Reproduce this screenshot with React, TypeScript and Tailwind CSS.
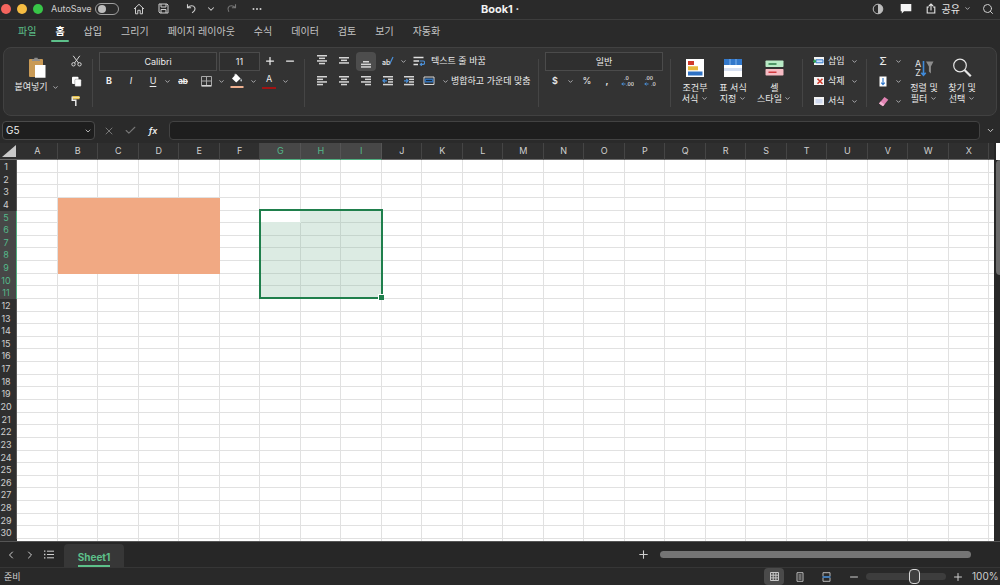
import type { ReactNode } from "react";
import { clsx } from "clsx";
import { Check, ChevronDown, ChevronLeft, ChevronRight, Minus, Plus, Search, X } from "lucide-react";

const TABS = ["파일", "홈", "삽입", "그리기", "페이지 레이아웃", "수식", "데이터", "검토", "보기", "자동화"];
const COLUMNS = "ABCDEFGHIJKLMNOPQRSTUVWX".split("");
const ROWS = Array.from({ length: 30 }, (_, i) => i + 1);

const inSelection = (col: number, row: number) => col >= 6 && col <= 8 && row >= 5 && row <= 11;
const isFilled = (col: number, row: number) => col >= 1 && col <= 4 && row >= 4 && row <= 9;

function Caret({ className }: { className?: string }) {
  return (
    <span className={clsx("flex shrink-0 justify-center text-zinc-300", className ?? "w-2")}>
      <ChevronDown size={7} strokeWidth={2.5} />
    </span>
  );
}

interface ToolProps {
  label: string;
  className?: string;
  children: ReactNode;
}

function Tool({ label, className, children }: ToolProps) {
  return (
    <button type="button" aria-label={label} className={clsx("flex h-5 shrink-0 items-center justify-center", className ?? "w-[22px]")}>
      {children}
    </button>
  );
}

function Divider() {
  return <div className="h-12 w-px shrink-0 self-center bg-[#454545]" />;
}

/* Stacked text lines, each entry is [x, width] */
function Lines({ rows, top = 1, children }: { rows: [number, number][]; top?: number; children?: ReactNode }) {
  return (
    <svg width="12" height="12" viewBox="0 0 12 12" fill="#d6d6d6">
      {rows.map(([x, w], i) => (
        <rect key={i} x={x} y={top + i * 2.6} width={w} height="1.5" />
      ))}
      {children}
    </svg>
  );
}

function TitleBar() {
  return (
    <header className="relative flex h-5 shrink-0 items-center justify-between border-b border-[#3d3d3d] pb-0.5 text-[#cfcfcf]">
      <div className="flex items-center">
        <div className="flex gap-1.5 pl-px">
          <span className="size-2.5 rounded-full bg-[#f5655e]" />
          <span className="size-2.5 rounded-full bg-[#f6bd42]" />
          <span className="size-2.5 rounded-full bg-[#38c648]" />
        </div>
        <label htmlFor="autosave" className="ml-2 w-[42px] text-[9px]">AutoSave</label>
        <input
          id="autosave"
          type="checkbox"
          className="ml-0.5 h-3 w-6 appearance-none rounded-full border border-[#a0a0a0] bg-[#2a2a2a] before:ml-0.5 before:mt-px before:block before:size-2 before:rounded-full before:bg-[#bdbdbd]"
        />
        <button type="button" aria-label="Home" className="ml-2 flex w-6 justify-center">
          <svg width="12" height="12" viewBox="0 0 12 12" fill="none" stroke="currentColor" strokeWidth="1">
            <path d="M1 6 6 1.3 11 6M2.5 5v5.8h2.3V7.3h2.4v3.5h2.3V5" />
          </svg>
        </button>
        <button type="button" aria-label="Save" className="flex w-6 justify-center">
          <svg width="11" height="11" viewBox="0 0 11 11" fill="none" stroke="currentColor" strokeWidth="1">
            <path d="M1 1h8l1 1v8H2L1 9zM3 1v3h5V1M3 10V6.5h5V10" />
          </svg>
        </button>
        <button type="button" aria-label="Undo" className="ml-1 flex w-6 justify-center">
          <svg width="11" height="11" viewBox="0 0 11 11" fill="none" stroke="currentColor" strokeWidth="1.1">
            <path d="M1.5 1.2v3.6h3.6M1.7 4.6C4 2.2 7.6 2.3 8.7 4.4c1 2-.2 3.6-2.6 5.3" />
          </svg>
        </button>
        <button type="button" aria-label="Undo history" className="flex w-4 justify-center">
          <ChevronDown size={10} strokeWidth={2.5} />
        </button>
        <button type="button" aria-label="Redo" className="flex w-6 justify-center text-[#777]">
          <svg width="11" height="11" viewBox="0 0 11 11" fill="none" stroke="currentColor" strokeWidth="1.1">
            <path d="M9.5 1.2v3.6H5.9M9.3 4.6C7 2.2 3.4 2.3 2.3 4.4c-1 2 .2 3.6 .6 4.3" />
          </svg>
        </button>
        <button type="button" aria-label="More" className="ml-0.5 flex w-6 justify-center">
          <svg width="10" height="4" viewBox="0 0 10 4" fill="currentColor">
            <circle cx="1.5" cy="2" r="1" />
            <circle cx="5" cy="2" r="1" />
            <circle cx="8.5" cy="2" r="1" />
          </svg>
        </button>
      </div>
      <h1 className="absolute inset-x-0 top-px mx-auto w-fit text-[11px] leading-4 font-bold text-[#f2f2f2]">Book1 ·</h1>
      <div className="flex items-center">
        <button type="button" aria-label="Contrast" className="flex w-7 justify-center">
          <svg width="12" height="12" viewBox="0 0 12 12">
            <circle cx="6" cy="6" r="4.8" fill="none" stroke="#bdbdbd" />
            <path d="M6 1.2a4.8 4.8 0 0 1 0 9.6z" fill="#bdbdbd" />
          </svg>
        </button>
        <button type="button" aria-label="Comments" className="flex w-7 justify-center">
          <svg width="12" height="11" viewBox="0 0 12 11" fill="#f5f5f5">
            <path d="M.7 1h10.6v7.3H4L1.8 10.4V8.3H.7z" />
          </svg>
        </button>
        <button type="button" className="ml-1 flex items-center text-[10px] leading-4 text-[#e6e6e6]">
          <svg className="mr-1.5 ml-0.5" width="10" height="11" viewBox="0 0 10 11" fill="none" stroke="currentColor" strokeWidth="1.1">
            <path d="M3 4H1.2v6h7.6V4H7M5 7.4V1M2.9 3 5 1l2.1 2" />
          </svg>
          공유
          <Caret className="ml-0.5 w-2.5" />
        </button>
        <button type="button" aria-label="Search" className="ml-1 flex w-6 justify-center">
          <Search size={12} strokeWidth={2} />
        </button>
      </div>
    </header>
  );
}

function RibbonTabs() {
  return (
    <nav className="flex h-[26px] shrink-0 gap-[19px] pl-[18px] text-[10px] leading-[22px] whitespace-nowrap text-[#c4c4c4]">
      {TABS.map((tab) => (
        <a
          key={tab}
          href="#"
          className={clsx(
            "h-[22px]",
            tab === "파일" && "text-[#5dc08a]",
            tab === "홈" && "relative font-bold text-white after:absolute after:-inset-x-1 after:bottom-0 after:h-0.5 after:rounded-full after:bg-[#5dc08a]",
          )}
        >
          {tab}
        </a>
      ))}
    </nav>
  );
}

function ClipboardGroup() {
  return (
    <div className="flex w-[88px] shrink-0">
      <button type="button" className="flex w-[66px] flex-col items-center pt-1.5">
        <svg width="18" height="22" viewBox="0 0 18 22">
          <rect x="1" y="2" width="14" height="18" rx="1" fill="#c99a55" />
          <path d="M4 2.2h2L6.5.8h3l.5 1.4h2V4H4z" fill="#8d8d8d" />
          <path d="M7 8h10.5v12.8H7z" fill="#fff" />
        </svg>
        <span className="mt-0.5 flex items-center gap-1 leading-3 whitespace-nowrap">
          붙여넣기
          <Caret />
        </span>
      </button>
      <div className="flex w-3 flex-col">
        <Tool label="잘라내기" className="w-3">
          <svg width="11" height="12" viewBox="0 0 11 12" fill="none" stroke="#d6d6d6" strokeWidth="1">
            <path d="M2.2.8 7.5 8M8.8.8 3.5 8" />
            <circle cx="2.5" cy="9.3" r="1.7" />
            <circle cx="8.5" cy="9.3" r="1.7" />
          </svg>
        </Tool>
        <Tool label="복사" className="w-3">
          <svg width="11" height="11" viewBox="0 0 11 11">
            <rect x="1" y=".8" width="6.5" height="7.2" rx="1" fill="#fff" />
            <rect x="3.8" y="3.2" width="6.4" height="7.2" rx="1" fill="#fff" stroke="#333" strokeWidth=".3" />
          </svg>
        </Tool>
        <Tool label="서식 복사" className="w-3">
          <svg width="10" height="12" viewBox="0 0 10 12">
            <path d="M1.5 1h7v3.2h-7z" fill="#e6c04c" />
            <path d="M1.2 1.6v3.6h3.6V11" fill="none" stroke="#f0f0f0" strokeWidth="1.4" />
            <path d="M1.2 2.6h7.6" stroke="#f5e6a8" />
          </svg>
        </Tool>
      </div>
    </div>
  );
}

function FontGroup() {
  return (
    <div>
      <div className="flex items-center gap-0.5">
        <input aria-label="글꼴" defaultValue="Calibri" className="h-[19px] w-[118px] border border-[#4b4b4b] bg-[#2f2f2f] text-center text-[9px]" />
        <input aria-label="글꼴 크기" defaultValue="11" className="h-[19px] w-[41px] border border-[#4b4b4b] bg-[#2f2f2f] text-center text-[9px]" />
        <Tool label="글꼴 크게" className="w-4">
          <Plus size={12} strokeWidth={2.5} />
        </Tool>
        <Tool label="글꼴 작게" className="w-5">
          <Minus size={12} strokeWidth={2.5} />
        </Tool>
      </div>
      <div className="flex items-center">
        <Tool label="굵게" className="w-5">
          <b>B</b>
        </Tool>
        <Tool label="기울임꼴" className="w-6">
          <i>I</i>
        </Tool>
        <Tool label="밑줄" className="w-5">
          <u className="underline-offset-2">U</u>
        </Tool>
        <Caret />
        <Tool label="취소선" className="w-6">
          <s className="text-[8px] font-bold">ab</s>
        </Tool>
        <Tool label="테두리">
          <svg width="11" height="11" viewBox="0 0 11 11" fill="none" stroke="#a8a8a8">
            <path d="M.5.5h10v9H.5zM5.5.5v9M.5 5h10" />
            <path d="M.5 10h10" stroke="#fff" />
          </svg>
        </Tool>
        <Caret />
        <Tool label="채우기 색" className="w-6">
          <svg width="14" height="16" viewBox="0 0 14 16">
            <path d="M6.2 1 10.6 5.4 6.2 9.6 2 5.4z" fill="#fff" />
            <path d="M5.2 3V.8" stroke="#fff" />
            <path d="M11 5.6c1.2 1.6 1.3 3 .2 3s-1-1.4-.2-3z" fill="#cfd8e0" />
            <path d="M.5 13h13v2H.5z" fill="#efb08f" />
          </svg>
        </Tool>
        <Caret />
        <Tool label="글꼴 색" className="w-6">
          <span className="flex h-4 w-3.5 items-start justify-center border-b-2 border-[#a01414] leading-3">A</span>
        </Tool>
        <Caret />
      </div>
    </div>
  );
}

function AlignGroup() {
  return (
    <div>
      <div className="flex items-center">
        <Tool label="위쪽 맞춤">
          <Lines rows={[[1, 10], [3, 6], [1, 10], [3, 6]]} top={0} />
        </Tool>
        <Tool label="가운데 맞춤">
          <Lines rows={[[1, 10], [3, 6], [1, 10]]} top={2} />
        </Tool>
        <Tool label="아래쪽 맞춤">
          <span className="flex h-[19px] w-5 items-end justify-center rounded-sm bg-[#4d4d4d] pb-0.5">
            <Lines rows={[[3, 6], [1, 10], [1, 10]]} top={4} />
          </span>
        </Tool>
        <Tool label="방향">
          <svg width="12" height="12" viewBox="0 0 12 12">
            <text x="0" y="10" fontSize="7" fontWeight="600" fill="#e0e0e0">ab</text>
            <path d="M7.5 9.5 11 2" stroke="#4a90d9" strokeWidth="1.2" />
          </svg>
        </Tool>
        <Caret />
        <button type="button" className="flex h-5 items-center whitespace-nowrap">
          <span className="flex w-6 justify-center">
            <svg width="12" height="10" viewBox="0 0 12 10" fill="none" stroke="#e0e0e0" strokeWidth="1.3">
              <path d="M.5 1.5h10M.5 5H6M.5 8.5H5" />
              <path d="M6.5 5H10a1.6 1.6 0 0 1 0 3.4H7.5M8.8 7 7.3 8.4 8.8 9.8" stroke="#4a90d9" strokeWidth="1.1" />
            </svg>
          </span>
          텍스트 줄 바꿈
        </button>
      </div>
      <div className="flex items-center">
        <Tool label="왼쪽 맞춤">
          <Lines rows={[[1, 10], [1, 6], [1, 10], [1, 6]]} />
        </Tool>
        <Tool label="가로 가운데 맞춤">
          <Lines rows={[[1, 10], [3, 6], [1, 10], [3, 6]]} />
        </Tool>
        <Tool label="오른쪽 맞춤">
          <Lines rows={[[1, 10], [5, 6], [1, 10], [5, 6]]} />
        </Tool>
        <Tool label="내어쓰기">
          <Lines rows={[[1, 10], [6, 5], [6, 5], [1, 10]]}>
            <path d="M5 5.8H1M2.7 4 1 5.8l1.7 1.8" fill="none" stroke="#4a90d9" strokeWidth="1.2" />
          </Lines>
        </Tool>
        <Tool label="들여쓰기" className="w-5">
          <Lines rows={[[1, 10], [6, 5], [6, 5], [1, 10]]}>
            <path d="M1 5.8h4M3.3 4 5 5.8 3.3 7.6" fill="none" stroke="#4a90d9" strokeWidth="1.2" />
          </Lines>
        </Tool>
        <button type="button" className="flex h-5 items-center whitespace-nowrap">
          <span className="flex w-5 justify-center">
            <svg width="12" height="10" viewBox="0 0 12 10" fill="none">
              <path d="M1 1h10v7.5H1z" stroke="#d6d6d6" />
              <path d="M1.5 2.5h9v4h-9z" fill="#2f6fb5" />
              <path d="M3 4.5h6" stroke="#1d2a38" />
            </svg>
          </span>
          <Caret className="w-3" />
          병합하고 가운데 맞춤
        </button>
      </div>
    </div>
  );
}

function DecimalIcon({ top, bottom, topX, bottomX }: { top: string; bottom: string; topX: number; bottomX: number }) {
  return (
    <svg width="13" height="12" viewBox="0 0 13 12" fill="#dcdcdc" fontSize="5" fontWeight="600">
      <text x={topX} y="5">{top}</text>
      <text x={bottomX} y="11">{bottom}</text>
      <path d="M4.5 9H.8M2.3 7.5.8 9l1.5 1.5" fill="none" stroke="#4a90d9" />
    </svg>
  );
}

function NumberGroup() {
  return (
    <div>
      <div className="flex h-5 items-center">
        <input aria-label="표시 형식" defaultValue="일반" className="h-[19px] w-[118px] border border-[#4b4b4b] bg-[#2f2f2f] text-center text-[9px]" />
      </div>
      <div className="flex items-center">
        <Tool label="통화" className="w-5">
          <span className="font-semibold">$</span>
        </Tool>
        <Caret className="w-2.5" />
        <Tool label="백분율" className="w-6">%</Tool>
        <Tool label="쉼표" className="w-4">
          <b>,</b>
        </Tool>
        <Tool label="자릿수 늘림" className="w-6">
          <DecimalIcon top=".0" bottom=".00" topX={3} bottomX={5} />
        </Tool>
        <Tool label="자릿수 줄임">
          <DecimalIcon top=".00" bottom=".0" topX={1} bottomX={7} />
        </Tool>
      </div>
    </div>
  );
}

interface BigToolProps {
  icon: ReactNode;
  lines: [string, string];
  className?: string;
}

function BigTool({ icon, lines, className }: BigToolProps) {
  return (
    <button type="button" className={clsx("flex shrink-0 flex-col items-center pt-[7px] leading-[11px] whitespace-nowrap", className ?? "w-[38px]")}>
      <span className="mb-1 flex h-5 items-center">{icon}</span>
      <span>{lines[0]}</span>
      <span className="flex items-center gap-0.5">
        {lines[1]}
        <Caret />
      </span>
    </button>
  );
}

function StylesGroup() {
  return (
    <div className="flex">
      <BigTool
        lines={["조건부", "서식"]}
        icon={
          <svg width="18" height="18" viewBox="0 0 18 18">
            <path d="M0 0h18v18H0z" fill="#fff" />
            <path d="M2 2h6v4H2z" fill="#d0392b" />
            <path d="M2 7.2h10v4H2z" fill="#e6b93c" />
            <path d="M2 12.4h14.5v4H2z" fill="#2f72c4" />
          </svg>
        }
      />
      <BigTool
        lines={["표 서식", "지정"]}
        icon={
          <svg width="18" height="18" viewBox="0 0 18 18">
            <path d="M0 0h18v18H0z" fill="#fff" />
            <path d="M0 0h18v6H0z" fill="#3278cb" />
            <path d="M6 0v6M12 0v6" stroke="#7fb2ea" />
            <path d="M0 9h18v3H0z" fill="#d7e0f2" />
          </svg>
        }
      />
      <BigTool
        className="w-[45px]"
        lines={["셀", "스타일"]}
        icon={
          <svg width="19" height="18" viewBox="0 0 19 18">
            <rect x=".5" y="1.5" width="18" height="6.5" rx=".8" fill="#b9eac6" />
            <path d="M3.5 5h8" stroke="#2c7a47" strokeWidth="1.4" />
            <rect x=".5" y="10" width="18" height="6.5" rx=".8" fill="#f6bcc4" />
            <path d="M3.5 13.3h8" stroke="#d23b41" strokeWidth="1.4" />
          </svg>
        }
      />
    </div>
  );
}

function CellsGroup() {
  const items = [
    { label: "삽입", art: <><path d="M3 3.8h7v3H3z" fill="#cfe2fa" stroke="#3278cb" /><path d="M0 5.3h3M1.8 3.5v3.6" stroke="#2e9d54" strokeWidth="1.4" /></> },
    { label: "삭제", art: <path d="m4.5 2.8 5 5M9.5 2.8l-5 5" stroke="#d0392b" strokeWidth="1.6" /> },
    { label: "서식", art: <path d="M2.5 3h7v4.5h-7z" fill="#cfd9ef" /> },
  ];
  return (
    <div className="flex flex-col">
      {items.map(({ label, art }) => (
        <button key={label} type="button" className="flex h-5 items-center gap-[3px] whitespace-nowrap">
          <svg width="12" height="10" viewBox="0 0 12 10" fill="none">
            <path d="M1 1h10v8H1z" fill="#f4f4f4" />
            {art}
          </svg>
          {label}
          <Caret className="ml-0.5 w-2.5" />
        </button>
      ))}
    </div>
  );
}

function EditGroup() {
  return (
    <div className="flex">
      <div className="flex w-8 flex-col">
        <button type="button" aria-label="자동 합계" className="flex h-5 items-center">
          <span className="w-5 text-center text-[11px] leading-4">Σ</span>
          <Caret className="w-2.5" />
        </button>
        <button type="button" aria-label="채우기" className="flex h-5 items-center">
          <span className="flex w-5 justify-center">
            <svg width="8" height="11" viewBox="0 0 8 11" fill="none">
              <path d="M.5.5h7v10h-7z" fill="#fff" />
              <path d="M4 2v6.5M2.2 6.6 4 8.6l1.8-2" stroke="#3278cb" strokeWidth="1.2" />
            </svg>
          </span>
          <Caret className="w-2.5" />
        </button>
        <button type="button" aria-label="지우기" className="flex h-5 items-center">
          <span className="flex w-5 justify-center">
            <svg width="11" height="11" viewBox="0 0 11 11">
              <path d="M6.5 1 10.3 3.8 5 10.2 1 7.4z" fill="#e183b3" />
              <path d="M2.6 5.6 6.5 8.4 5 10.2 1 7.4z" fill="#f4b5d3" />
            </svg>
          </span>
          <Caret className="w-2.5" />
        </button>
      </div>
      <BigTool
        lines={["정렬 및", "필터"]}
        icon={
          <svg width="20" height="20" viewBox="0 0 20 20">
            <g fill="#e6e6e6" fontSize="9">
              <text x="1" y="9">A</text>
              <text x="1.3" y="18">Z</text>
            </g>
            <path d="M9.5 3v14M7.3 14.7l2.2 2.6 2.2-2.6" fill="none" stroke="#3f8ad8" strokeWidth="1.6" />
            <path d="M12 3.5h7.5l-2.6 5v7l-2-2v-5z" fill="#8d8d8d" />
          </svg>
        }
      />
      <BigTool
        lines={["찾기 및", "선택"]}
        icon={
          <svg width="20" height="20" viewBox="0 0 20 20" fill="none" stroke="#e6e6e6">
            <circle cx="8" cy="7.5" r="6.3" strokeWidth="1.2" />
            <path d="m12.5 12 6.3 6.3" strokeWidth="2.2" />
          </svg>
        }
      />
    </div>
  );
}

function Ribbon() {
  return (
    <section className="mx-[3px] mt-px flex h-[69px] shrink-0 overflow-hidden rounded-lg border border-[#414141] bg-[#333] pt-[3px] text-[9px] text-[#ebebeb]">
      <ClipboardGroup />
      <Divider />
      <div className="w-[211px] pl-1.5">
        <FontGroup />
      </div>
      <Divider />
      <div className="w-[233px] pl-1.5">
        <AlignGroup />
      </div>
      <Divider />
      <div className="w-[131px] pl-1.5">
        <NumberGroup />
      </div>
      <Divider />
      <div className="px-[5px]">
        <StylesGroup />
      </div>
      <Divider />
      <div className="w-[63px] pl-2.5">
        <CellsGroup />
      </div>
      <Divider />
      <div className="pl-1.5">
        <EditGroup />
      </div>
    </section>
  );
}

function FormulaBar() {
  return (
    <div className="mt-[5px] flex h-[22px] shrink-0 items-start pl-0.5 text-[#cfcfcf]">
      <div className="flex h-[19px] w-[93px] items-center rounded-sm border border-[#4a4a4a] bg-[#1e1e1e] pr-0.5">
        <input aria-label="이름 상자" defaultValue="G5" className="min-w-0 flex-1 bg-transparent pl-[3px] text-[10px] text-[#ececec]" />
        <ChevronDown size={8} strokeWidth={2.5} />
      </div>
      <div className="flex h-[19px] w-[74px] items-center gap-px pl-1">
        <button type="button" aria-label="취소" className="flex w-5 justify-center text-[#777]">
          <X size={12} strokeWidth={2} />
        </button>
        <button type="button" aria-label="입력" className="flex w-5 justify-center text-[#777]">
          <Check size={13} strokeWidth={2} />
        </button>
        <button type="button" aria-label="함수 삽입" className="flex w-6 justify-center text-[9px] font-semibold text-[#ececec] italic">
          fx
        </button>
      </div>
      <input aria-label="수식 입력줄" className="h-[19px] min-w-0 flex-1 rounded-sm border border-[#424242] bg-[#1e1e1e] px-2 text-[10px]" />
      <button type="button" aria-label="수식 입력줄 확장" className="flex h-[19px] w-5 items-center justify-center">
        <ChevronDown size={9} strokeWidth={2.5} />
      </button>
    </div>
  );
}

function Grid() {
  return (
    <div className="flex min-h-0 flex-1">
      <table className="flex min-w-0 flex-1 flex-col text-[9px]">
        <thead className="block shrink-0">
          <tr className="grid h-[17px] grid-cols-[17px_repeat(24,minmax(0,1fr))_5px] bg-[#2f2f2f] text-[#d0d0d0]">
            <th className="flex items-end justify-end border-b border-[#6a6a6a]">
              <svg width="16" height="15" viewBox="0 0 16 15">
                <path d="M15 1v12H1z" fill="#c9c9c9" />
              </svg>
            </th>
            {COLUMNS.map((name, c) => (
              <th
                key={name}
                scope="col"
                className={clsx(
                  "border-r border-b pl-px leading-4 font-normal",
                  c >= 6 && c <= 8
                    ? "border-r-[#555] border-b-[#4fae80] bg-[#474747] text-[#55b98a]"
                    : "border-r-[#454545] border-b-[#6a6a6a]",
                )}
              >
                {name}
              </th>
            ))}
            <th className="border-b border-[#6a6a6a]" />
          </tr>
        </thead>
        <tbody className="grid min-h-0 flex-1 grid-rows-[repeat(30,minmax(0,1fr))_2px] bg-white">
          {ROWS.map((row) => (
            <tr key={row} className="grid grid-cols-[17px_repeat(24,minmax(0,1fr))_5px] grid-rows-[minmax(0,1fr)]">
              <th
                scope="row"
                className={clsx(
                  "border-r pt-px pr-1 leading-3 font-normal",
                  row >= 5 && row <= 11 ? "border-[#4fae80] bg-[#474747] text-[#55b98a]" : "border-[#555] bg-[#2f2f2f] text-[#d0d0d0]",
                )}
              >
                {row}
              </th>
              {COLUMNS.map((name, c) => (
                <td
                  key={name}
                  className={clsx(
                    "border-r border-b",
                    isFilled(c, row) && "border-[#f1a983] bg-[#f1a983]",
                    inSelection(c, row) && !(c === 6 && row === 5) && "border-[#c6d5cd] bg-[#dcebe3]",
                    !isFilled(c, row) && !inSelection(c, row) && "border-[#e1e1e1]",
                    c === 6 && row === 5 && "relative border-[#dcebe3]",
                  )}
                >
                  {/* outline for G5:I11, sized from its first cell */}
                  {c === 6 && row === 5 && (
                    <div className="pointer-events-none absolute -top-0.5 -left-px h-[calc(700%+9px)] w-[calc(300%+5px)] border-2 border-[#1f7f4c]">
                      <span className="absolute -right-[3px] -bottom-[3px] size-[6px] border-t border-l border-white bg-[#1f7f4c]" />
                    </div>
                  )}
                </td>
              ))}
              <td className="border-b border-[#e1e1e1]" />
            </tr>
          ))}
          <tr className="grid grid-cols-[17px_repeat(24,minmax(0,1fr))_5px]">
            <th className="bg-[#2f2f2f]" />
            {COLUMNS.map((name) => (
              <td key={name} className="border-r border-[#e1e1e1]" />
            ))}
            <td />
          </tr>
        </tbody>
      </table>
      <div className="flex w-1.5 flex-col bg-[#262626] pl-0.5">
        <div className="h-[17px] bg-white" />
        <div className="h-[29%] rounded-l-sm bg-[#6b6b6b]" />
      </div>
    </div>
  );
}

function SheetBar() {
  return (
    <div className="flex h-[26px] shrink-0 items-center border-t border-[#555] bg-[#272727] pr-[29px] text-[#cfcfcf]">
      <div className="flex flex-1 items-center self-stretch">
        <button type="button" aria-label="이전 시트" className="ml-[3px] flex w-4 justify-center">
          <ChevronLeft size={12} strokeWidth={2} />
        </button>
        <button type="button" aria-label="다음 시트" className="ml-[3px] flex w-4 justify-center">
          <ChevronRight size={12} strokeWidth={2} />
        </button>
        <button type="button" aria-label="모든 시트" className="ml-px flex w-5 justify-center">
          <svg width="10" height="9" viewBox="0 0 10 9" fill="none" stroke="currentColor">
            <path d="M3 1.2h7M3 4.5h7M3 7.8h7" />
            <path d="M0 1.2h1.4M0 4.5h1.4M0 7.8h1.4" strokeWidth="1.3" />
          </svg>
        </button>
        <button type="button" className="ml-[5px] flex h-[23px] w-[60px] items-end justify-center self-end rounded-t-sm bg-[#373737] text-[10px] leading-4 font-bold text-[#5dc08a]">
          <span className="border-b-2 border-[#5dc08a]">Sheet1</span>
        </button>
      </div>
      <button type="button" aria-label="새 시트" className="mr-2.5">
        <Plus size={13} />
      </button>
      <div className="h-[7px] w-[32%] rounded-full bg-[#757575]" />
    </div>
  );
}

function StatusBar() {
  return (
    <footer className="flex h-[18px] shrink-0 items-center border-t border-[#363636] bg-[#292929] pr-[3px] pl-1 text-[9px] text-[#cfcfcf]">
      <span className="flex-1">준비</span>
      <button type="button" aria-label="기본 보기" className="flex h-[17px] w-5 items-center justify-center rounded-sm bg-[#4a4a4a]">
        <svg width="9" height="9" viewBox="0 0 9 9" fill="none" stroke="#c8c8c8">
          <path d="M.5.5h8v8h-8zM3.2.5v8M5.9.5v8M.5 3.2h8M.5 5.9h8" />
        </svg>
      </button>
      <button type="button" aria-label="페이지 레이아웃" className="flex w-8 justify-center">
        <svg width="8" height="10" viewBox="0 0 8 10" fill="none" stroke="#b8b8b8">
          <path d="M1 .7h6v8.6H1zM2.5 3h3M2.5 5h3M2.5 7h3" />
        </svg>
      </button>
      <button type="button" aria-label="페이지 나누기" className="flex w-5 justify-center">
        <svg width="9" height="10" viewBox="0 0 9 10" fill="none" stroke="#b8b8b8">
          <path d="M1 4V.7h7V4M1 6v3.3h7V6" />
          <path d="M.5 5h8" stroke="#4a90d9" strokeWidth="1.6" />
        </svg>
      </button>
      <button type="button" aria-label="축소" className="ml-2 flex w-5 justify-center">
        <Minus size={12} />
      </button>
      <input
        type="range"
        aria-label="확대/축소"
        defaultValue={62}
        className="mx-0.5 h-[7px] w-20 appearance-none rounded-full bg-[#3d3d3d] [&::-webkit-slider-thumb]:h-[15px] [&::-webkit-slider-thumb]:w-[11px] [&::-webkit-slider-thumb]:appearance-none [&::-webkit-slider-thumb]:rounded-sm [&::-webkit-slider-thumb]:border [&::-webkit-slider-thumb]:border-[#d8d8d8] [&::-webkit-slider-thumb]:bg-[#3f3f3f]"
      />
      <button type="button" aria-label="확대" className="flex w-5 justify-center">
        <Plus size={12} />
      </button>
      <span className="ml-1 w-[25px] text-[10px]">100%</span>
    </footer>
  );
}

export default function App() {
  return (
    <main className="flex h-screen min-h-[500px] flex-col overflow-hidden bg-[#2a2a2a] font-['Inter','Noto_Sans_CJK_KR',sans-serif]">
      <TitleBar />
      <RibbonTabs />
      <Ribbon />
      <FormulaBar />
      <Grid />
      <SheetBar />
      <StatusBar />
    </main>
  );
}
